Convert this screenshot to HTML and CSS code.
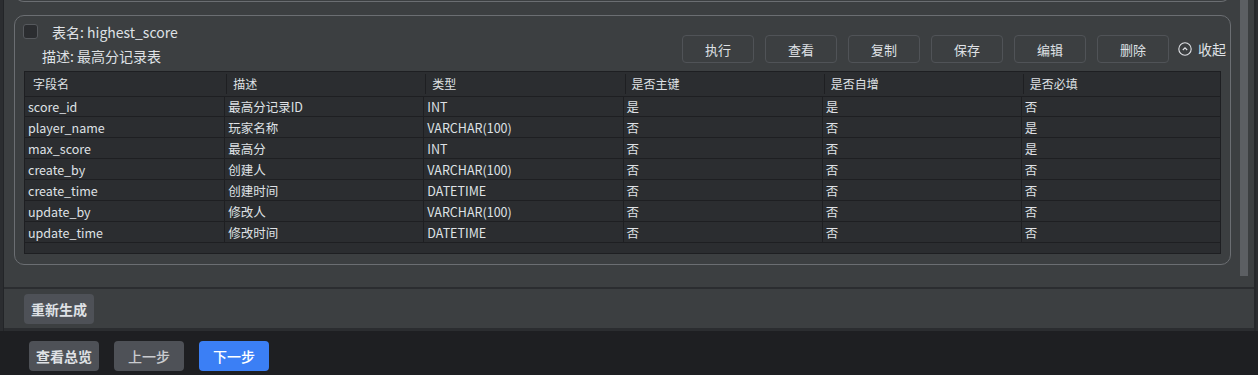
FILE: index.html
```html
<!DOCTYPE html>
<html lang="zh-CN">
<head>
<meta charset="utf-8">
<title>表结构</title>
<link rel="stylesheet" href="styles.css">
</head>
<body>
<div class="app">
  <div class="main">
    <div class="scroll">
      <div class="scroll-content">
        <div class="card card-prev"></div>
        <div class="card">
          <div class="card-header">
            <div class="card-info">
              <div class="title-row">
                <span class="checkbox"></span>
                <span class="title">表名: highest_score</span>
              </div>
              <div class="desc">描述: 最高分记录表</div>
            </div>
            <div class="actions">
              <button class="btn-outline">执行</button>
              <button class="btn-outline">查看</button>
              <button class="btn-outline">复制</button>
              <button class="btn-outline">保存</button>
              <button class="btn-outline">编辑</button>
              <button class="btn-outline">删除</button>
              <span class="collapse">
                <svg class="collapse-icon" width="14" height="14" viewBox="0 0 14 14">
                  <circle cx="7" cy="7" r="6.2" fill="none" stroke="#dfe1e5" stroke-width="1.1"/>
                  <path d="M4.8 8 L7 5.8 L9.2 8" fill="none" stroke="#dfe1e5" stroke-width="1.1"/>
                </svg>
                <span>收起</span>
              </span>
            </div>
          </div>
          <div class="table">
            <div class="th">字段名</div><div class="th">描述</div><div class="th">类型</div><div class="th">是否主键</div><div class="th">是否自增</div><div class="th">是否必填</div>

            <div class="td">score_id</div><div class="td">最高分记录ID</div><div class="td">INT</div><div class="td">是</div><div class="td">是</div><div class="td">否</div>
            <div class="td">player_name</div><div class="td">玩家名称</div><div class="td">VARCHAR(100)</div><div class="td">否</div><div class="td">否</div><div class="td">是</div>
            <div class="td">max_score</div><div class="td">最高分</div><div class="td">INT</div><div class="td">否</div><div class="td">否</div><div class="td">是</div>
            <div class="td">create_by</div><div class="td">创建人</div><div class="td">VARCHAR(100)</div><div class="td">否</div><div class="td">否</div><div class="td">否</div>
            <div class="td">create_time</div><div class="td">创建时间</div><div class="td">DATETIME</div><div class="td">否</div><div class="td">否</div><div class="td">否</div>
            <div class="td">update_by</div><div class="td">修改人</div><div class="td">VARCHAR(100)</div><div class="td">否</div><div class="td">否</div><div class="td">否</div>
            <div class="td">update_time</div><div class="td">修改时间</div><div class="td">DATETIME</div><div class="td">否</div><div class="td">否</div><div class="td">否</div>
            <div class="filler"></div>
          </div>
        </div>
      </div>
      <div class="vscroll"><div class="thumb"></div></div>
    </div>
    <div class="regen">
      <button class="btn-solid">重新生成</button>
    </div>
  </div>
  <div class="footer">
    <button class="btn-solid">查看总览</button>
    <button class="btn-solid btn-muted">上一步</button>
    <button class="btn-solid btn-primary">下一步</button>
  </div>
</div>
</body>
</html>
```
FILE: styles.css
```css
* { box-sizing: border-box; }

html, body {
  margin: 0;
  padding: 0;
}

body {
  width: 1258px;
  height: 375px;
  overflow: hidden;
  background: #2b2d30;
  color: #dfe1e5;
  font-family: "Noto Sans CJK SC", "Noto Sans", sans-serif;
}

.app {
  display: flex;
  flex-direction: column;
  height: 375px;
}

.main {
  margin-left: 3px;
  margin-right: 2px;
  border-left: 1px solid #232528;
  border-right: 2px solid #26282b;
}

.scroll {
  height: 287px;
  display: flex;
  background: #3c3f41;
  overflow: hidden;
}

.scroll-content {
  width: 1232px;
  padding-left: 10px;
}

.card {
  width: 1217px;
  border: 1px solid #6b6e72;
  border-radius: 10px;
}

.card-prev {
  height: 12px;
  margin-top: -10px;
  margin-bottom: 13px;
  border-width: 0 1.5px 1.5px 1.5px;
  border-radius: 0 0 10px 10px;
}

.card:not(.card-prev) {
  height: 250px;
  padding: 0 9px 10px 9px;
}

.card-header {
  height: 55px;
  display: flex;
  justify-content: space-between;
  align-items: flex-end;
  margin-right: -5px;
}

.card-info {
  align-self: flex-start;
  display: flex;
  flex-direction: column;
}

.title-row {
  display: flex;
  align-items: center;
  margin-top: 8px;
  margin-left: -1px;
  height: 15px;
}

.checkbox {
  width: 15px;
  height: 15px;
  background: #2b2d30;
  border: 1px solid #56595d;
  border-radius: 3px;
}

.title {
  margin-left: 14px;
  font-size: 14px;
  line-height: 16px;
}

.desc {
  margin-top: 9px;
  margin-left: 18px;
  font-size: 14px;
  line-height: 16px;
}

.actions {
  display: flex;
  align-items: center;
  gap: 11px;
  margin-bottom: 8px;
}

.btn-outline {
  width: 72px;
  height: 28px;
  background: #3c3f41;
  border: 1px solid #505357;
  border-radius: 4px;
  color: #dfe1e5;
  font-family: inherit;
  font-size: 13px;
  padding: 0;
}

.collapse {
  display: flex;
  align-items: center;
  gap: 6px;
  margin-left: -2px;
  font-size: 14px;
  line-height: 16px;
}

.collapse-icon {
  display: block;
}

.table {
  width: 1197px;
  height: 183px;
  background: #2b2d30;
  border: 1px solid #1e1f22;
  display: grid;
  grid-template-columns: repeat(6, 1fr);
  grid-template-rows: 24px repeat(7, 21px) 1fr;
}

.th {
  font-size: 12px;
  line-height: 21px;
  padding-top: 1px;
  padding-left: 8px;
  white-space: nowrap;
}

.th + .th {
  border-left: 1px solid #1e1f22;
  margin: 2px 0 0 2px;
  padding-top: 0;
  padding-left: 6px;
  line-height: 20px;
  height: 20px;
}

.td {
  font-size: 12.5px;
  line-height: 20px;
  padding-top: 1px;
  padding-left: 3px;
  border-bottom: 1px solid #1e1f22;
  white-space: nowrap;
}

.td:not(:nth-child(6n+1)) {
  border-left: 1px solid #1e1f22;
}

.td:nth-child(-n+12) {
  border-top: 1px solid #1e1f22;
  padding-top: 0;
}

.filler {
  grid-column: 1 / -1;
}

.vscroll {
  width: 8px;
  margin-left: 4px;
}

.thumb {
  height: 276px;
  background: #5c5f63;
}

.regen {
  height: 44px;
  border-top: 2px solid #2b2d30;
  border-bottom: 3px solid #2b2d30;
  background: #3c3f41;
  padding: 5px 0 0 20px;
}

.btn-solid {
  width: 70px;
  height: 30px;
  border: none;
  border-radius: 4px;
  background: #4e5157;
  color: #dfe1e5;
  font-family: inherit;
  font-size: 14px;
  font-weight: 700;
  padding: 0;
}

.footer {
  flex: 1;
  background: #1e1f22;
  display: flex;
  align-items: flex-start;
  gap: 15px;
  padding: 10px 0 0 29px;
}

.btn-muted {
  color: #c9cbcf;
  font-weight: 500;
}

.btn-primary {
  background: #3b7ff5;
  color: #ffffff;
  font-weight: 500;
}
```
